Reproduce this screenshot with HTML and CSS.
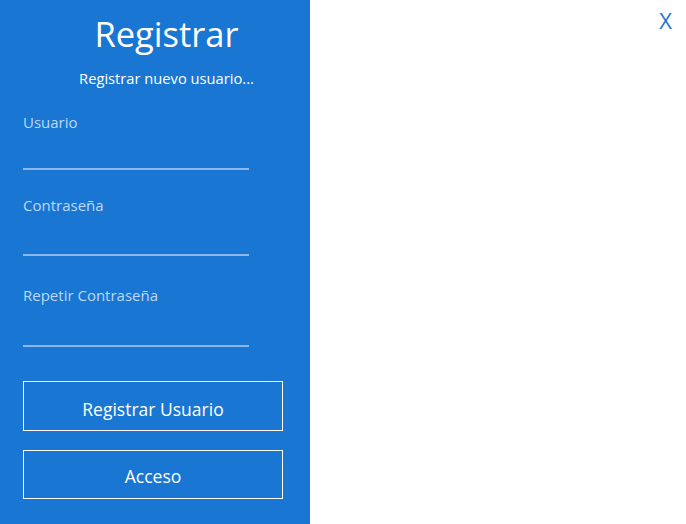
FILE: index.html
```html
<!DOCTYPE html>
<html lang="es">
<head>
<meta charset="utf-8">
<title>Registrar</title>
<link rel="stylesheet" href="styles.css">
</head>
<body>
<div class="window">
  <aside class="panel">
    <h1 class="title">Registrar</h1>
    <p class="subtitle">Registrar nuevo usuario...</p>
    <div class="field field-user">
      <label class="label">Usuario</label>
      <div class="line"></div>
    </div>
    <div class="field field-pass">
      <label class="label">Contraseña</label>
      <div class="line"></div>
    </div>
    <div class="field field-repeat">
      <label class="label">Repetir Contraseña</label>
      <div class="line"></div>
    </div>
    <div class="actions">
      <button class="btn btn-main">Registrar Usuario</button>
      <button class="btn btn-alt">Acceso</button>
    </div>
  </aside>
  <main class="content">
    <span class="close">X</span>
  </main>
</div>
</body>
</html>
```
FILE: styles.css
```css
html, body {
  margin: 0;
  padding: 0;
  background: #ffffff;
}
body {
  font-family: "Open Sans", "Noto Sans", sans-serif;
}
.window {
  display: flex;
  width: 686px;
  height: 524px;
}
.panel {
  width: 310px;
  flex: none;
  background: #1976d2;
  color: #ffffff;
  padding: 0 0 0 23px;
  box-sizing: border-box;
  display: flex;
  flex-direction: column;
}
.title {
  margin: 12px 0 0 0;
  font-size: 34.5px;
  font-weight: 400;
  line-height: 44px;
  text-align: center;
}
.subtitle {
  margin: 12px 0 0 0;
  font-size: 14.7px;
  line-height: 20px;
  text-align: center;
}
.field {
  display: flex;
  flex-direction: column;
  width: 226px;
}
.label {
  font-size: 15px;
  line-height: 20px;
  color: #bcd9f7;
}
.line {
  height: 2px;
  background: #8bb8e8;
}
.field-user .label { margin-top: 24px; }
.field-user .line { margin-top: 36px; }
.field-pass .label { margin-top: 25px; }
.field-pass .line { margin-top: 39px; }
.field-repeat .label { margin-top: 29px; }
.field-repeat .line { margin-top: 40px; }
.actions {
  margin-top: 34px;
  display: flex;
  flex-direction: column;
  gap: 19px;
}
.btn {
  width: 260px;
  box-sizing: border-box;
  background: transparent;
  border: 1px solid #ffffff;
  color: #ffffff;
  font-family: inherit;
  font-size: 17.5px;
  padding: 0;
  cursor: pointer;
}
.btn-main {
  height: 50px;
  padding-top: 5px;
}
.btn-alt {
  height: 49px;
  padding-top: 3px;
}
.content {
  flex: 1;
  display: flex;
  justify-content: flex-end;
  align-items: flex-start;
}
.close {
  color: #1976d2;
  font-size: 22px;
  line-height: 26px;
  margin: 7px 14px 0 0;
}
```
